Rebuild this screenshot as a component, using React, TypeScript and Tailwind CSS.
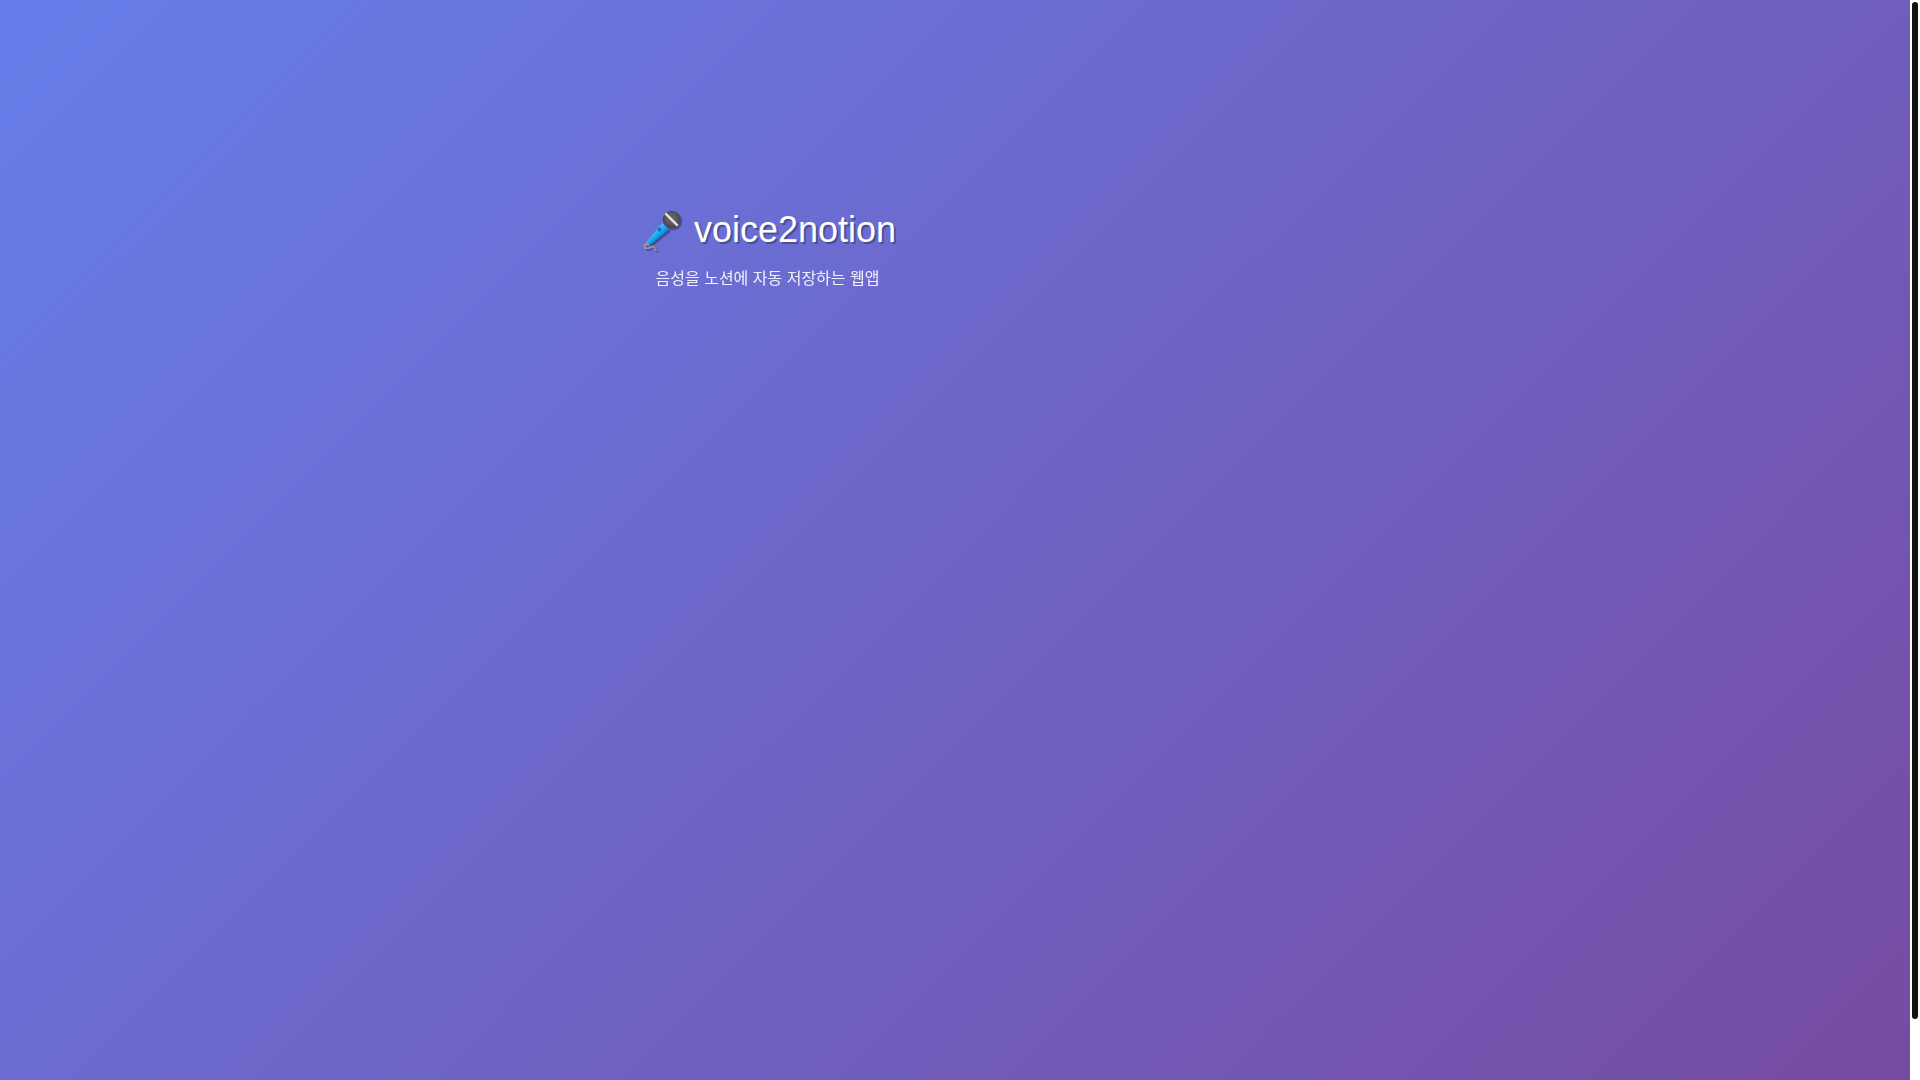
function Microphone() {
  return (
    <svg
      viewBox="0 0 45 40"
      className="h-10 w-[45px] overflow-visible [filter:drop-shadow(2px_2px_0_rgba(0,0,0,0.3))]"
      role="img"
      aria-label="microphone"
    >
      <defs>
        <linearGradient id="mic-body" x1="0.350" y1="0.350" x2="0.650" y2="0.650">
          <stop offset="0" stopColor="#40c4ff" />
          <stop offset="0.5" stopColor="#1ea7f2" />
          <stop offset="1" stopColor="#0288d1" />
        </linearGradient>
        <radialGradient id="mic-head" cx="0.5" cy="0.45" r="0.55">
          <stop offset="0.4" stopColor="#616161" />
          <stop offset="1" stopColor="#424242" />
        </radialGradient>
      </defs>
      <path
        d="M7.500 34C5 35.500 5 38.300 7.500 38.300C10 38.300 11.500 35.800 14 36.500C16.500 37.200 14.500 39.500 17 40"
        fill="none"
        stroke="#a39b98"
        strokeWidth="1.500"
        strokeLinecap="round"
      />
      <path d="M7.500 31.500L10.800 34.500L9.300 36L6.300 33.500Z" fill="#9e9e9e" />
      <path
        d="M23.500 13L30 19.500L12 34Q10.300 35 8.800 33.700Q7.300 32.300 8.300 30.800Z"
        fill="url(#mic-body)"
      />
      <ellipse cx="20.500" cy="19.500" rx="2.200" ry="1.600" fill="#0277bd" transform="rotate(-45 20.500 19.500)" />
      <circle cx="32.500" cy="9.500" r="8.800" fill="url(#mic-head)" />
      <path d="M26.300 3.300L38.700 15.700" stroke="#e0e0e0" strokeWidth="2.500" />
    </svg>
  )
}

function Header() {
  return (
    <header className="text-center text-white">
      <h1 className="mb-[17px] flex items-center justify-center gap-[10px] text-4xl font-normal [text-shadow:2px_2px_0_rgba(0,0,0,0.3)]">
        <Microphone />
        voice2notion
      </h1>
      <p className="text-base opacity-90">음성을 노션에 자동 저장하는 웹앱</p>
    </header>
  )
}

function ScrollTrack() {
  return (
    <div className="flex h-screen w-[10px] shrink-0 justify-center bg-white py-[2px]" aria-hidden="true">
      <div className="h-[94.5%] w-[6px] rounded-full bg-[#111111]" />
    </div>
  )
}

export default function App() {
  return (
    <div className="flex h-screen overflow-hidden font-['Liberation_Sans','Noto_Sans_CJK_KR',sans-serif]">
      <main className="flex-1 bg-[linear-gradient(135deg,#667eea_0%,#764ba2_100%)] pt-[210px]">
        <div className="mx-auto grid w-full max-w-[750px] grid-cols-2">
          <Header />
        </div>
      </main>
      <ScrollTrack />
    </div>
  )
}
